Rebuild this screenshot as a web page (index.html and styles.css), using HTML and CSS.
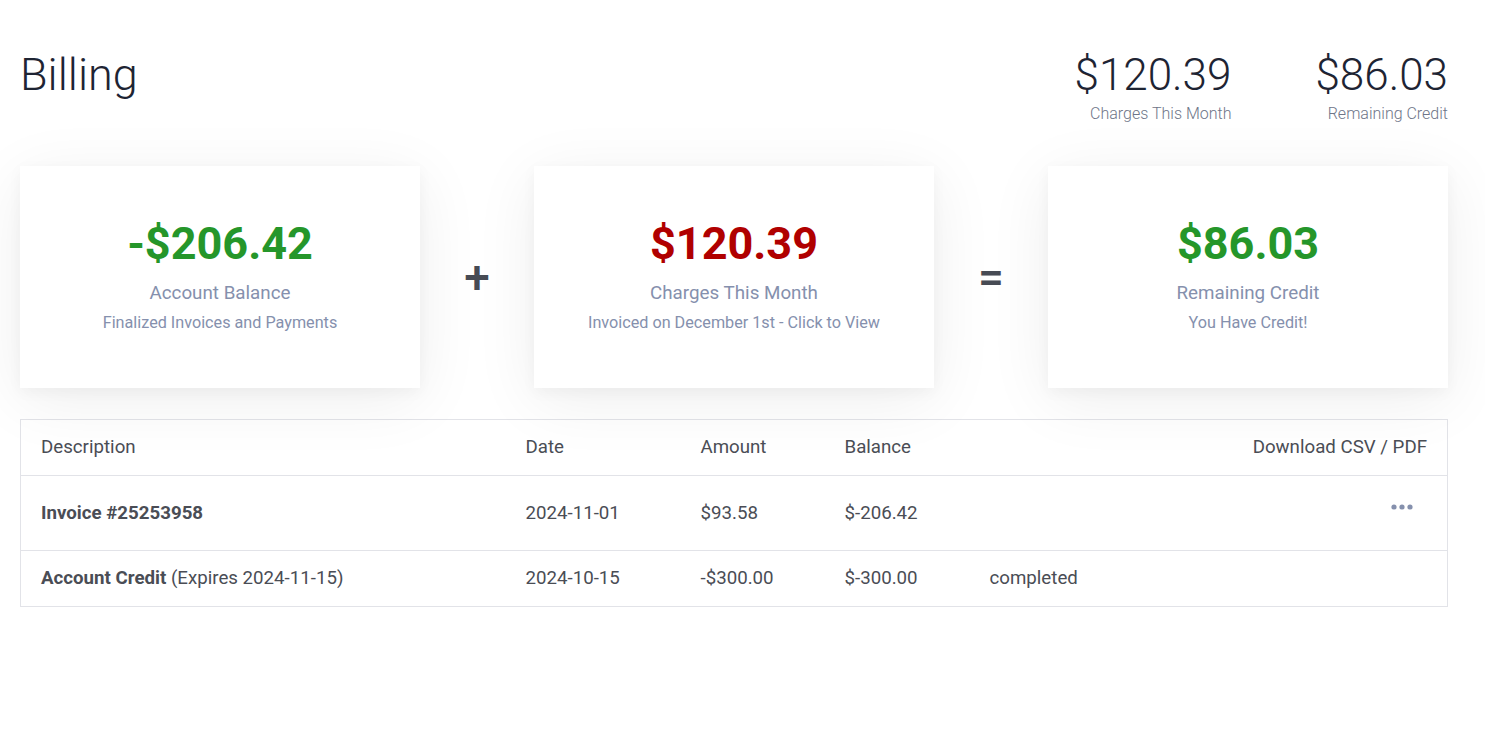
FILE: index.html
```html
<!DOCTYPE html>
<html lang="en">
<head>
<meta charset="utf-8">
<title>Billing</title>
<link rel="stylesheet" href="styles.css">
</head>
<body>
<div class="page">
  <header class="top">
    <h1 class="title">Billing</h1>
    <div class="stats">
      <div class="stat">
        <div class="stat-value">$120.39</div>
        <div class="stat-label">Charges This Month</div>
      </div>
      <div class="stat">
        <div class="stat-value">$86.03</div>
        <div class="stat-label">Remaining Credit</div>
      </div>
    </div>
  </header>

  <section class="summary">
    <div class="card">
      <div class="amount green">-$206.42</div>
      <div class="card-label">Account Balance</div>
      <div class="card-sub">Finalized Invoices and Payments</div>
    </div>
    <div class="op">+</div>
    <div class="card">
      <div class="amount red">$120.39</div>
      <div class="card-label">Charges This Month</div>
      <div class="card-sub">Invoiced on December 1st - Click to View</div>
    </div>
    <div class="op">=</div>
    <div class="card">
      <div class="amount green">$86.03</div>
      <div class="card-label">Remaining Credit</div>
      <div class="card-sub">You Have Credit!</div>
    </div>
  </section>

  <table class="ledger">
    <colgroup>
      <col class="c-desc">
      <col class="c-date">
      <col class="c-amt">
      <col class="c-bal">
      <col>
      <col class="c-act">
    </colgroup>
    <thead>
      <tr>
        <th>Description</th>
        <th>Date</th>
        <th>Amount</th>
        <th>Balance</th>
        <th class="right" colspan="2">Download CSV / PDF</th>
      </tr>
    </thead>
    <tbody>
      <tr class="row-tall">
        <td><strong>Invoice #25253958</strong></td>
        <td>2024-11-01</td>
        <td>$93.58</td>
        <td>$-206.42</td>
        <td></td>
        <td class="actions">
          <span class="more" aria-label="More">
            <svg width="22" height="6" viewBox="0 0 22 6"><circle cx="3" cy="3" r="2.6"/><circle cx="11" cy="3" r="2.6"/><circle cx="19" cy="3" r="2.6"/></svg>
          </span>
        </td>
      </tr>
      <tr>
        <td><strong>Account Credit</strong> (Expires 2024-11-15)</td>
        <td>2024-10-15</td>
        <td>-$300.00</td>
        <td>$-300.00</td>
        <td>completed</td>
        <td></td>
      </tr>
    </tbody>
  </table>
</div>
</body>
</html>
```

FILE: styles.css
```css
* { box-sizing: border-box; }

html, body {
  margin: 0;
  padding: 0;
  background: #ffffff;
}

body {
  font-family: Roboto, "Liberation Sans", Arial, sans-serif;
  color: #4a4d55;
}

.page {
  padding: 52px 37px 0 20px;
}

.top {
  display: flex;
  justify-content: space-between;
  align-items: flex-start;
}

.title {
  margin: 0;
  font-size: 45px;
  line-height: 46px;
  font-weight: 300;
  color: #1e2433;
}

.stats {
  display: flex;
  gap: 84px;
}

.stat {
  text-align: right;
}

.stat-value {
  font-size: 44px;
  line-height: 46px;
  font-weight: 300;
  color: #1e2433;
}

.stat-label {
  margin-top: 6px;
  font-size: 16px;
  line-height: 20px;
  font-weight: 300;
  color: #6e7588;
}

.summary {
  margin-top: 42px;
  display: flex;
  align-items: center;
}

.card {
  width: 400px;
  height: 222px;
  flex: none;
  background: #fff;
  padding-top: 52px;
  text-align: center;
  box-shadow: 0 12px 60px rgba(0, 0, 0, 0.07), 0 4px 14px rgba(0, 0, 0, 0.04);
}

.amount {
  font-size: 45px;
  line-height: 52px;
  font-weight: 700;
}

.green { color: #25962a; }
.red { color: #b00000; }

.card-label {
  margin-top: 11px;
  font-size: 18.8px;
  line-height: 24px;
  color: #8590ad;
}

.card-sub {
  margin-top: 8px;
  font-size: 16.2px;
  line-height: 20px;
  color: #8590ad;
}

.op {
  flex: 1;
  text-align: center;
  font-size: 46px;
  line-height: 46px;
  font-weight: 500;
  color: #474b54;
}

.ledger {
  margin-top: 31px;
  width: 100%;
  border-collapse: collapse;
  table-layout: fixed;
  border: 1px solid #e2e3e8;
  font-size: 18.7px;
  color: #4a4d55;
}

.c-desc { width: 485px; }
.c-date { width: 175px; }
.c-amt { width: 144px; }
.c-bal { width: 145px; }
.c-act { width: 120px; }

.ledger th,
.ledger td {
  padding: 0 20px;
  text-align: left;
  vertical-align: middle;
  white-space: nowrap;
}

.ledger th {
  height: 56px;
  font-weight: 400;
  padding-bottom: 2px;
}

.ledger td {
  height: 56px;
}

.ledger tr {
  border-bottom: 1px solid #e2e3e8;
}

.ledger tbody tr:last-child td {
  padding-bottom: 2px;
}

.ledger .row-tall td {
  height: 75px;
}

.ledger .right {
  text-align: right;
}

.ledger td strong {
  font-weight: 700;
}

.ledger .actions {
  text-align: right;
  padding-right: 34px;
}

.more {
  display: inline-block;
  position: relative;
  top: -9px;
  fill: #8590ad;
  line-height: 0;
}
```
